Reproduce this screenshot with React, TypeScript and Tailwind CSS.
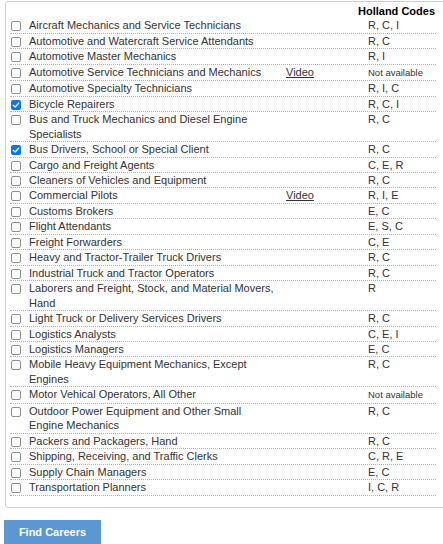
import React from "react";

type Career = {
  name: string;
  codes: string;
  video?: boolean;
  checked?: boolean;
};

const careers: Career[] = [
  { name: "Aircraft Mechanics and Service Technicians", codes: "R, C, I" },
  { name: "Automotive and Watercraft Service Attendants", codes: "R, C" },
  { name: "Automotive Master Mechanics", codes: "R, I" },
  { name: "Automotive Service Technicians and Mechanics", codes: "", video: true },
  { name: "Automotive Specialty Technicians", codes: "R, I, C" },
  { name: "Bicycle Repairers", codes: "R, C, I", checked: true },
  { name: "Bus and Truck Mechanics and Diesel Engine Specialists", codes: "R, C" },
  { name: "Bus Drivers, School or Special Client", codes: "R, C", checked: true },
  { name: "Cargo and Freight Agents", codes: "C, E, R" },
  { name: "Cleaners of Vehicles and Equipment", codes: "R, C" },
  { name: "Commercial Pilots", codes: "R, I, E", video: true },
  { name: "Customs Brokers", codes: "E, C" },
  { name: "Flight Attendants", codes: "E, S, C" },
  { name: "Freight Forwarders", codes: "C, E" },
  { name: "Heavy and Tractor-Trailer Truck Drivers", codes: "R, C" },
  { name: "Industrial Truck and Tractor Operators", codes: "R, C" },
  { name: "Laborers and Freight, Stock, and Material Movers, Hand", codes: "R" },
  { name: "Light Truck or Delivery Services Drivers", codes: "R, C" },
  { name: "Logistics Analysts", codes: "C, E, I" },
  { name: "Logistics Managers", codes: "E, C" },
  { name: "Mobile Heavy Equipment Mechanics, Except Engines", codes: "R, C" },
  { name: "Motor Vehical Operators, All Other", codes: "" },
  { name: "Outdoor Power Equipment and Other Small Engine Mechanics", codes: "R, C" },
  { name: "Packers and Packagers, Hand", codes: "R, C" },
  { name: "Shipping, Receiving, and Traffic Clerks", codes: "C, R, E" },
  { name: "Supply Chain Managers", codes: "E, C" },
  { name: "Transportation Planners", codes: "I, C, R" },
];

function Checkbox({ checked }: { checked?: boolean }) {
  if (checked) {
    return (
      <span className="mt-[3px] ml-[1px] flex h-[10px] w-[10px] items-center justify-center rounded-[2px] bg-[#0075ff]">
        <svg viewBox="0 0 10 10" className="h-[8px] w-[8px]" fill="none">
          <path d="M1.5 5.2 L4 7.5 L8.5 2.5" stroke="white" strokeWidth="1.6" strokeLinecap="round" strokeLinejoin="round" />
        </svg>
      </span>
    );
  }
  return <span className="mt-[3px] ml-[1px] block h-[10px] w-[10px] rounded-[2px] border border-[#8f8f8f] bg-white" />;
}

export default function App() {
  return (
    <div className="w-full overflow-hidden bg-white text-[11px] leading-[14.45px] text-[#333]" style={{ fontFamily: '"Liberation Sans", Arial, sans-serif' }}>
      <div className="mt-[1px] ml-[5px] w-[470px] rounded-[3px] border border-[#cfcfcf] pl-[4px] pt-[2px] pb-[11px]">
        <div className="w-[426px]">
          {/* header */}
          <div className="grid grid-cols-[19px_257px_72px_78px]">
            <div />
            <div />
            <div />
            <div className="font-bold text-black">Holland Codes</div>
          </div>

          {careers.map((c) => (
            <div key={c.name} className="grid grid-cols-[19px_257px_72px_78px] border-b border-dotted border-[#b3b3b3]">
              <div className="flex items-start">
                <Checkbox checked={c.checked} />
              </div>
              <div className="pr-[12px]">{c.name}</div>
              <div>{c.video && <span className="underline">Video</span>}</div>
              <div className="pl-[10px]">
                {c.codes ? c.codes : <span className="text-[9.5px]">Not available</span>}
              </div>
            </div>
          ))}
        </div>
      </div>

      <button className="mt-[12px] ml-[4px] h-[30px] w-[97px] bg-[#5b97d1] pb-[4px] text-[11px] font-bold text-white">
        Find Careers
      </button>
    </div>
  );
}
